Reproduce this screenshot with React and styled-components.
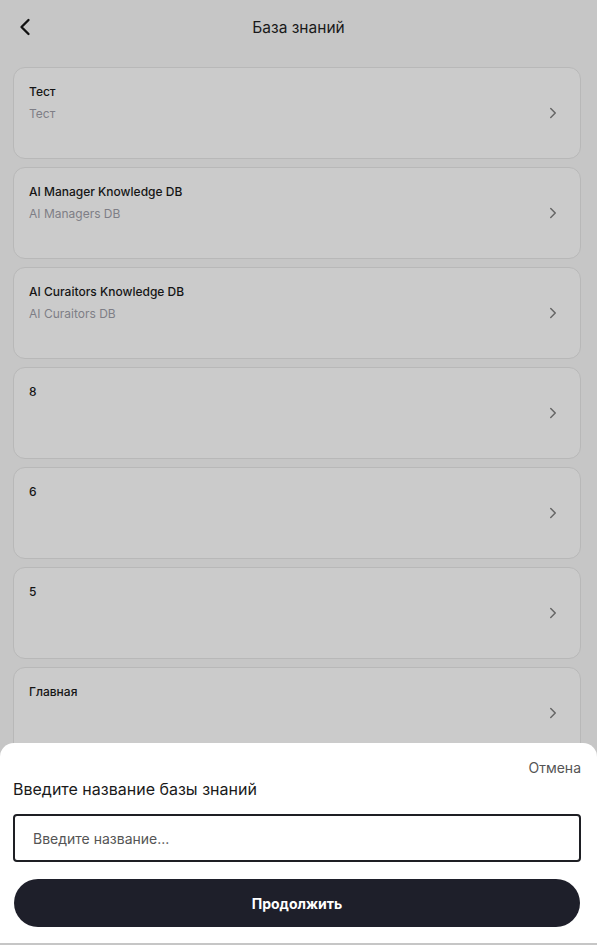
import React from 'react';
import styled, { createGlobalStyle } from 'styled-components';
import { ChevronLeft, ChevronRight } from 'lucide-react';

const GlobalStyle = createGlobalStyle`
  html, body {
    margin: 0;
    padding: 0;
    background: #c6c6c6;
    font-family: Inter, "Noto Sans", sans-serif;
  }
  * { box-sizing: border-box; }
`;

const Page = styled.div`
  width: 597px;
  height: 945px;
  overflow: hidden;
  position: relative;
  background: #c6c6c6;
`;

const Header = styled.div`
  display: flex;
  align-items: center;
  justify-content: center;
  height: 55px;
  position: relative;
`;

const BackButton = styled.div`
  position: absolute;
  left: 11px;
  top: 13px;
  display: flex;
  color: #111;
`;

const Title = styled.h1`
  margin: 0;
  font-size: 15.5px;
  font-weight: 400;
  color: #1a1a1a;
`;

const List = styled.div`
  display: flex;
  flex-direction: column;
  gap: 8px;
  padding: 12px 16px 0 13px;
`;

const Card = styled.div`
  display: flex;
  align-items: center;
  justify-content: space-between;
  height: 92px;
  padding: 0 18px 0 15px;
  background: #cbcbcb;
  border: 1px solid #b8b8b8;
  border-radius: 12px;
`;

const CardText = styled.div`
  align-self: flex-start;
  display: flex;
  flex-direction: column;
  gap: 4px;
  padding-top: 15px;
`;

const CardTitle = styled.div`
  font-size: 12px;
  font-weight: 500;
  line-height: 18px;
  color: #151515;
`;

const CardSub = styled.div`
  font-size: 12px;
  line-height: 18px;
  color: #7e7e86;
`;

const Arrow = styled.div`
  display: flex;
  color: #666;
`;

const Sheet = styled.div`
  position: absolute;
  left: 0;
  right: 0;
  bottom: 2px;
  height: 200px;
  background: #fff;
  border-radius: 14px 14px 0 0;
  padding: 17px 16px 0 13px;
  display: flex;
  flex-direction: column;
`;

const Cancel = styled.div`
  align-self: flex-end;
  font-size: 14px;
  color: #555;
  line-height: 16px;
`;

const Label = styled.div`
  font-size: 16px;
  color: #1a1a1a;
  line-height: 20px;
  margin-top: 3px;
`;

const Input = styled.input`
  margin-top: 15px;
  height: 48px;
  width: 100%;
  border: 2px solid #1e1f24;
  border-radius: 4px;
  padding: 0 18px;
  font-family: inherit;
  font-size: 14px;
  color: #222;
  outline: none;
  &::placeholder { color: #555; }
`;

const Button = styled.button`
  margin-top: 17px;
  margin-left: 1px;
  width: 566px;
  height: 48px;
  border: none;
  border-radius: 24px;
  background: #1e1f2a;
  color: #fff;
  font-family: inherit;
  font-size: 14px;
  font-weight: 700;
`;

const items = [
  { title: 'Тест', sub: 'Тест' },
  { title: 'AI Manager Knowledge DB', sub: 'AI Managers DB' },
  { title: 'AI Curaitors Knowledge DB', sub: 'AI Curaitors DB' },
  { title: '8' },
  { title: '6' },
  { title: '5' },
  { title: 'Главная' },
];

const App = () => {
  return (
    <Page>
      <GlobalStyle />
      <Header>
        <BackButton><ChevronLeft size={28} strokeWidth={2} /></BackButton>
        <Title>База знаний</Title>
      </Header>
      <List>
        {items.map((it, i) => (
          <Card key={i}>
            <CardText>
              <CardTitle>{it.title}</CardTitle>
              {it.sub && <CardSub>{it.sub}</CardSub>}
            </CardText>
            <Arrow><ChevronRight size={18} strokeWidth={2} /></Arrow>
          </Card>
        ))}
      </List>
      <Sheet>
        <Cancel>Отмена</Cancel>
        <Label>Введите название базы знаний</Label>
        <Input placeholder="Введите название..." />
        <Button>Продолжить</Button>
      </Sheet>
    </Page>
  );
};

export default App;
